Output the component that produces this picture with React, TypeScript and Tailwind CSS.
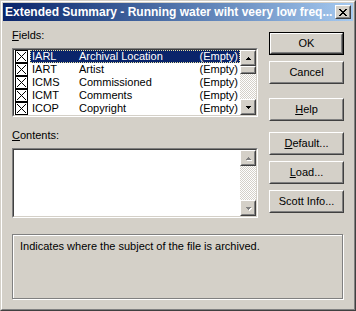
import React from 'react';

const rows = [
    { code: 'IARL', name: 'Archival Location', value: '(Empty)', selected: true },
    { code: 'IART', name: 'Artist', value: '(Empty)' },
    { code: 'ICMS', name: 'Commissioned', value: '(Empty)' },
    { code: 'ICMT', name: 'Comments', value: '(Empty)' },
    { code: 'ICOP', name: 'Copyright', value: '(Empty)' },
];

function Raised({ className = '', children }: { className?: string; children?: React.ReactNode }) {
    return (
        <div className={`border border-t-white border-l-white border-b-[#404040] border-r-[#404040] bg-[#d4d0c8] ${className}`}>
            <div className="w-full h-full border border-t-[#d4d0c8] border-l-[#d4d0c8] border-b-[#808080] border-r-[#808080] flex items-center justify-center">
                {children}
            </div>
        </div>
    );
}

function Arrow({ up, disabled }: { up?: boolean; disabled?: boolean }) {
    const d = up ? 'M4 3h1v1h1v1h1v1H2V5h1V4h1z' : 'M2 3h5v1H6v1H5v1H4V5H3V4H2z';
    return (
        <svg width="9" height="9" viewBox="0 0 9 9" shapeRendering="crispEdges">
            {disabled && <path d={d} fill="#ffffff" transform="translate(1 1)" />}
            <path d={d} fill={disabled ? '#808080' : '#000000'} />
        </svg>
    );
}

function ScrollBar({ disabled, thumb }: { disabled?: boolean; thumb?: boolean }) {
    return (
        <div className="w-[16px] h-full flex flex-col bg-[repeating-conic-gradient(#ffffff_0_25%,#d4d0c8_0_50%)] bg-[length:2px_2px]">
            <Raised className="w-[16px] h-[16px]">
                <Arrow up disabled={disabled} />
            </Raised>
            {thumb && <Raised className="w-[16px] h-[8px]" />}
            <div className="flex-1" />
            <Raised className="w-[16px] h-[16px]">
                <Arrow disabled={disabled} />
            </Raised>
        </div>
    );
}

function Sunken({ className = '', children }: { className?: string; children?: React.ReactNode }) {
    return (
        <div className={`border border-t-[#808080] border-l-[#808080] border-b-white border-r-white ${className}`}>
            <div className="w-full h-full border border-t-[#404040] border-l-[#404040] border-b-[#d4d0c8] border-r-[#d4d0c8] bg-white flex">
                {children}
            </div>
        </div>
    );
}

function CheckBox() {
    return (
        <svg width="13" height="13" viewBox="0 0 13 13" shapeRendering="crispEdges" className="shrink-0">
            <rect x="0.5" y="0.5" width="12" height="12" fill="#ffffff" stroke="#000000" />
            <path d="M2 2L11 11M11 2L2 11" stroke="#000000" strokeWidth="1" shapeRendering="auto" />
        </svg>
    );
}

function Button({ children, isDefault, className = '' }: { children: React.ReactNode; isDefault?: boolean; className?: string }) {
    if (isDefault) {
        return (
            <div className={`w-[75px] h-[23px] border border-black ${className}`}>
                <Raised className="w-full h-full">{children}</Raised>
            </div>
        );
    }
    return <Raised className={`w-[75px] h-[23px] ${className}`}>{children}</Raised>;
}

export default function App() {
    return (
        <div className="w-[356px] h-[311px] bg-[#d4d0c8] text-[11px] leading-[13px] text-black font-['Liberation_Sans',Arial,sans-serif]">
            {/* Window frame */}
            <div className="w-full h-full border border-t-[#d4d0c8] border-l-[#d4d0c8] border-b-[#404040] border-r-[#404040]">
                <div className="w-full h-full border border-t-white border-l-white border-b-[#808080] border-r-[#808080] p-px flex flex-col">
                    {/* Title bar */}
                    <div className="h-[18px] bg-gradient-to-r from-[#0a246a] to-[#a6caf0] flex items-center justify-between pl-[2px] pr-[2px]">
                        <span className="text-white font-bold text-[12px] whitespace-nowrap">
                            Extended Summary - Running water wiht veery low freq...
                        </span>
                        <Raised className="w-[16px] h-[14px]">
                            <svg width="8" height="7" viewBox="0 0 8 7" shapeRendering="crispEdges">
                                <path d="M0 0h2v1h1v1h2V1h1V0h2v1H7v1H6v1H5v1h1v1h1v1h1v1H6V6H5V5H3v1H2v1H0V6h1V5h1V4h1V3H2V2H1V1H0z" fill="#000" />
                            </svg>
                        </Raised>
                    </div>

                    {/* Body */}
                    <div className="flex-1 flex flex-col pl-[9px] pr-[8px]">
                        <div className="flex">
                            {/* Left column */}
                            <div className="w-[246px] flex flex-col pt-[8px]">
                                <div className="h-[13px]">
                                    <span className="underline">F</span>ields:
                                </div>
                                <Sunken className="mt-[6px] w-[246px] h-[69px]">
                                    <div className="flex-1 flex flex-col pl-px">
                                        {rows.map((r) => (
                                            <div key={r.code} className="h-[13px] flex items-center">
                                                <CheckBox />
                                                <div
                                                    className={`ml-[2px] flex-1 h-[13px] flex items-center pl-[1px] pr-px ${
                                                        r.selected ? 'bg-[#0a246a] text-white border border-dotted border-[#e8e0a0]' : 'border border-transparent'
                                                    }`}
                                                >
                                                    <span className="w-[47px]">{r.code}</span>
                                                    <span className="flex-1">{r.name}</span>
                                                    <span>{r.value}</span>
                                                </div>
                                            </div>
                                        ))}
                                    </div>
                                    <ScrollBar thumb />
                                </Sunken>

                                <div className="h-[13px] mt-[12px]">
                                    <span className="underline">C</span>ontents:
                                </div>
                                <Sunken className="mt-[6px] w-[246px] h-[70px]">
                                    <div className="flex-1" />
                                    <ScrollBar disabled />
                                </Sunken>
                            </div>

                            {/* Right column */}
                            <div className="ml-[11px] flex flex-col pt-[11px]">
                                <Button isDefault>OK</Button>
                                <Button className="mt-[6px]">Cancel</Button>
                                <Button className="mt-[14px]">
                                    <span><span className="underline">H</span>elp</span>
                                </Button>
                                <Button className="mt-[11px]">
                                    <span><span className="underline">D</span>efault...</span>
                                </Button>
                                <Button className="mt-[6px]">
                                    <span><span className="underline">L</span>oad...</span>
                                </Button>
                                <Button className="mt-[6px]">Scott Info...</Button>
                            </div>
                        </div>

                        {/* Description group */}
                        <div className="mt-[16px] w-[331px] h-[65px] border border-[#808080] shadow-[inset_1px_1px_0_#ffffff,1px_1px_0_#ffffff] pl-[7px] pt-[5px]">
                            Indicates where the subject of the file is archived.
                        </div>
                    </div>
                </div>
            </div>
        </div>
    );
}
